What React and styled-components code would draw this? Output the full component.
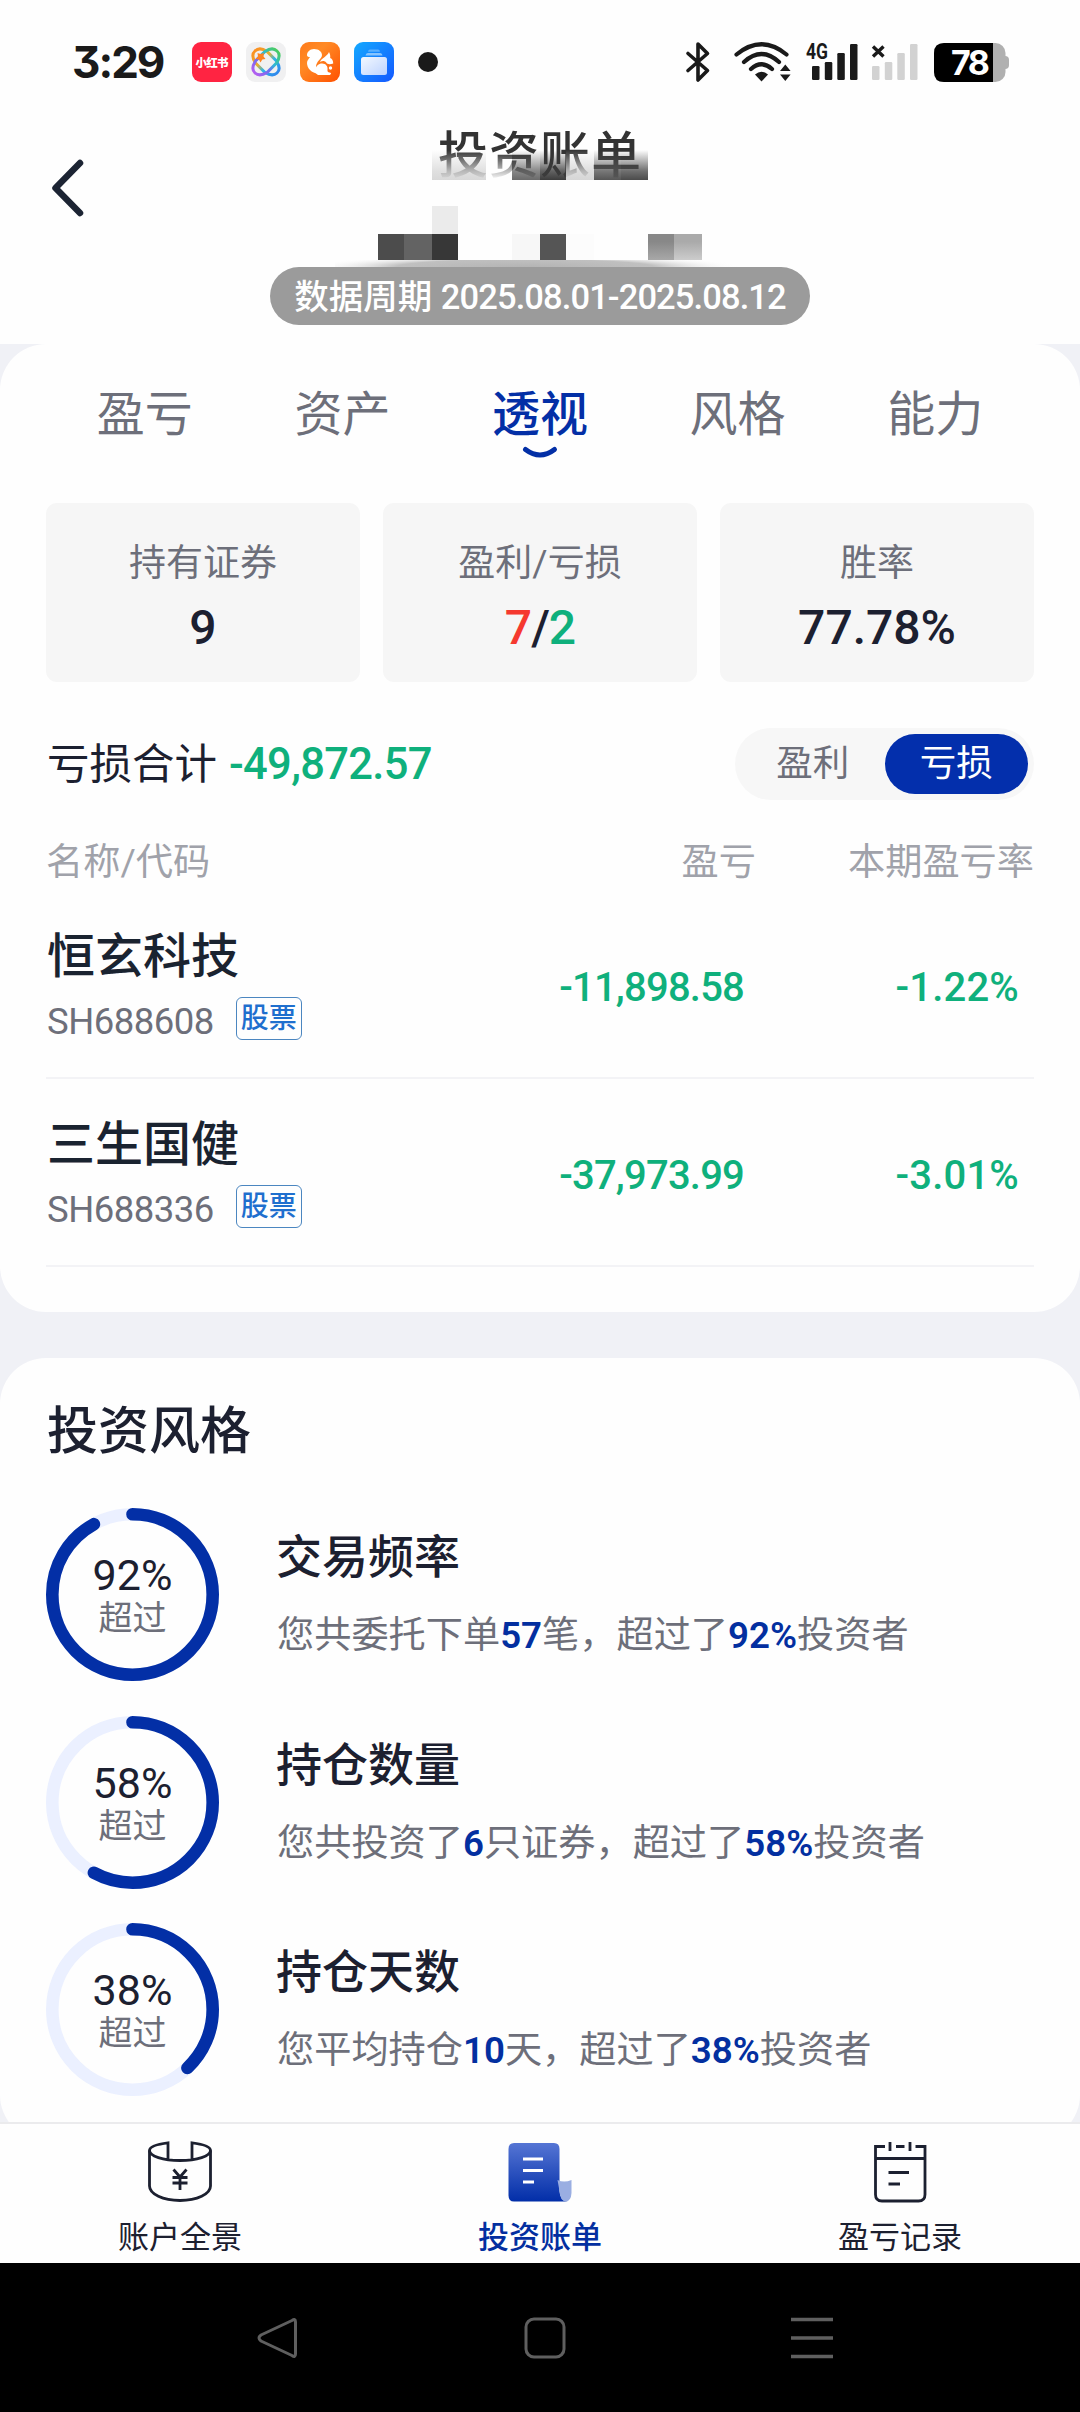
import React from "react";
import styled, { createGlobalStyle } from "styled-components";

const GlobalStyle = createGlobalStyle`
  * {
    box-sizing: border-box;
  }
  body {
    margin: 0;
    font-family: Roboto, "Noto Sans CJK SC", sans-serif;
    color: #1c2030;
    background-color: #fefefe;
  }
  svg {
    display: block;
    flex-shrink: 0;
    overflow: visible;
  }
`;

const Screen = styled.div`
  width: 1080px;
  height: 2412px;
  display: flex;
  flex-direction: column;
  overflow: hidden;
  background-color: #fefefe;
`;

/* status bar */

const StatusBar = styled.div`
  height: 124px;
  flex-shrink: 0;
  display: flex;
  align-items: center;
  justify-content: space-between;
  padding: 0 71px 0 72px;
  color: #1a1a1a;
`;

const StatusGroup = styled.div`
  display: flex;
  align-items: center;
  gap: ${(props) => props.$gap}px;
`;

const Clock = styled.span`
  width: 106px;
  font-family: Inter, sans-serif;
  font-feature-settings: "cv09" 1;
  font-size: 44px;
  font-weight: 700;
  line-height: 60px;
  letter-spacing: -2px;
`;

const MoreDot = styled.span`
  width: 20px;
  height: 20px;
  margin-left: 10px;
  border-radius: 50%;
  background-color: #1a1a1a;
`;

const Signals = styled(StatusGroup)`
  margin-left: 8px;
`;

/* header */

const Header = styled.header`
  position: relative;
  height: 220px;
  flex-shrink: 0;
  display: grid;
  grid-template-columns: 120px 1fr 120px;
`;

const BackButton = styled.div`
  padding: 35px 0 0 49px;
`;

const HeaderCenter = styled.div`
  display: flex;
  flex-direction: column;
  align-items: center;
`;

const Title = styled.h1`
  margin: 0;
  font-size: 50px;
  font-weight: 500;
  line-height: 64px;
  letter-spacing: 1px;
  color: #333;
`;

const Period = styled.div`
  width: 540px;
  height: 58px;
  margin-top: 79px;
  border-radius: 29px;
  text-align: center;
  font-size: 34.5px;
  font-weight: 500;
  line-height: 60px;
  white-space: nowrap;
  color: #fff;
  background-color: #9b9b9b;
`;

const PeriodDates = styled.span`
  letter-spacing: -0.9px;
`;

const Mosaic = styled.svg`
  position: absolute;
  left: 330px;
  top: 16px;
`;

/* content */

const Content = styled.main`
  flex: 1;
  min-height: 0;
  overflow: hidden;
  background-color: #f0f1f6;
`;

const Card = styled.section`
  height: ${(props) => props.height}px;
  padding: 0 46px;
  margin-bottom: 46px;
  border-radius: 46px;
  background-color: #fefefe;
`;

const Tabs = styled.nav`
  display: flex;
  height: 159px;
  padding-top: 39px;
`;

const Tab = styled.div`
  flex: 1;
  display: flex;
  flex-direction: column;
  align-items: center;
  font-size: 48px;
  line-height: 64px;
  font-weight: ${(props) => (props.$current ? 500 : 400)};
  color: ${(props) => (props.$current ? "#032fa6" : "#6d6f7a")};
`;

const Stats = styled.div`
  display: grid;
  grid-template-columns: repeat(3, 1fr);
  gap: 23px;
`;

const Stat = styled.div`
  height: 179px;
  padding-top: 39px;
  border-radius: 11px;
  text-align: center;
  background-color: #f6f6f6;
`;

const StatLabel = styled.div`
  font-size: 37px;
  line-height: 44px;
  color: #6d6f7a;
`;

const StatValue = styled.div`
  margin-top: 14px;
  font-size: 48px;
  font-weight: 500;
  line-height: 56px;
`;

const Counts = styled(StatValue)`
  letter-spacing: -1px;
`;

const Up = styled.span`
  color: #f5392f;
`;

const Down = styled.span`
  color: #0fb07c;
`;

const Summary = styled.div`
  display: flex;
  align-items: center;
  justify-content: space-between;
  height: 72px;
  margin-top: 46px;
`;

const SummaryText = styled.div`
  padding: 2px 0 0 1px;
  font-size: 42.5px;
  line-height: 60px;
`;

const Total = styled(Down)`
  margin-left: 12px;
  font-size: 43.5px;
  font-weight: 500;
  letter-spacing: -0.7px;
`;

const Toggle = styled.div`
  display: flex;
  width: 299px;
  height: 72px;
  padding: 6px;
  border-radius: 36px;
  background-color: #f7f7f7;
`;

const ToggleItem = styled.div`
  flex: 1;
  border-radius: 30px;
  text-align: center;
  font-size: 36.5px;
  line-height: 59px;
  color: ${(props) => (props.$on ? "#fff" : "#6d6f7a")};
  background-color: ${(props) => (props.$on ? "#032fac" : "transparent")};
`;

const TableHead = styled.div`
  display: grid;
  grid-template-columns: 1fr 301px 278px;
  margin: 40px 0 7px;
  font-size: 37.2px;
  line-height: 44px;
  color: #a0a2aa;
`;

const HeadCell = styled.div`
  text-align: ${(props) => props.$align || "left"};
`;

const Row = styled.div`
  display: grid;
  grid-template-columns: 1fr 300px 275px;
  height: 188px;
  padding-right: 15px;
  border-bottom: 2px solid #f3f3f6;
`;

const Security = styled.div`
  padding: 36px 0 0 1px;
`;

const SecurityName = styled.div`
  font-size: 48px;
  font-weight: 500;
  line-height: 60px;
  color: #1a2330;
`;

const SecurityCode = styled.div`
  display: flex;
  align-items: flex-start;
  gap: 22px;
  margin-top: 10px;
  font-size: 36.5px;
  line-height: 49px;
  letter-spacing: -0.5px;
  color: #6d6f7a;
`;

const Tag = styled.span`
  width: 66px;
  height: 43px;
  border: 1.5px solid #4b86c0;
  border-radius: 6px;
  text-align: center;
  font-size: 28px;
  font-weight: 500;
  line-height: 41px;
  letter-spacing: 0;
  color: #1f6fce;
`;

const Amount = styled.div`
  padding-top: 72px;
  text-align: right;
  font-size: 40px;
  font-weight: 500;
  line-height: 49px;
  letter-spacing: ${(props) => props.$tracking}px;
  color: #0fb07c;
`;

const CardTitle = styled.h2`
  margin: 0;
  padding: 39px 0 41px 1px;
  font-size: 51px;
  font-weight: 500;
  line-height: 70px;
`;

const StyleItem = styled.div`
  display: flex;
  height: 173px;
  margin-bottom: 34.5px;
`;

const RingBox = styled.div`
  display: grid;
  width: 173px;
  height: 173px;
  > * {
    grid-area: 1 / 1;
  }
`;

const RingText = styled.div`
  display: flex;
  flex-direction: column;
  align-items: center;
  padding-top: 43px;
  font-size: 43px;
  line-height: 48px;
`;

const RingCaption = styled.span`
  font-size: 34px;
  line-height: 38px;
  color: #6d6f7a;
`;

const StyleInfo = styled.div`
  padding: 19px 0 0 57px;
`;

const StyleName = styled.div`
  font-size: 46px;
  font-weight: 500;
  line-height: 60px;
`;

const StyleDesc = styled.div`
  margin-top: 23px;
  padding-left: 1px;
  font-size: 37.2px;
  line-height: 50px;
  white-space: nowrap;
  color: #6d6f7a;
  b {
    font-size: 36.7px;
    font-weight: 600;
    color: #032fa0;
  }
`;

/* bottom bars */

const TabBar = styled.nav`
  display: flex;
  height: 141px;
  flex-shrink: 0;
  border-top: 2px solid #ebebed;
`;

const TabBarItem = styled.div`
  flex: 1;
  display: flex;
  flex-direction: column;
  align-items: center;
  gap: 15px;
  padding-top: 17px;
  font-size: 31px;
  line-height: 40px;
  font-weight: ${(props) => (props.$current ? 500 : 400)};
  color: ${(props) => (props.$current ? "#032fa0" : "#1c2030")};
`;

const SystemNav = styled.div`
  display: flex;
  align-items: center;
  justify-content: space-between;
  height: 149px;
  flex-shrink: 0;
  padding: 0 247px 0 257px;
  background-color: #000;
`;

const RedBookIcon = () => (
  <svg width="40" height="40" viewBox="0 0 40 40">
    <rect width="40" height="40" rx="9" fill="#ff2442" />
    <text
      x="20"
      y="24.5"
      textAnchor="middle"
      fontSize="11.5"
      fontWeight="900"
      fontFamily="Noto Sans CJK SC, sans-serif"
      textLength="33"
      fill="#fff"
    >
      小红书
    </text>
  </svg>
);

const KnotIcon = () => (
  <svg width="40" height="40" viewBox="0 0 40 40">
    <defs>
      <linearGradient id="knotA" gradientUnits="userSpaceOnUse" x1="7" y1="7" x2="33" y2="33">
        <stop offset="0" stopColor="#ff8a1f" />
        <stop offset="0.4" stopColor="#e6b030" />
        <stop offset="0.6" stopColor="#2fb5e8" />
        <stop offset="1" stopColor="#2f7fee" />
      </linearGradient>
      <linearGradient id="knotB" gradientUnits="userSpaceOnUse" x1="33" y1="7" x2="7" y2="33">
        <stop offset="0" stopColor="#4fcf4a" />
        <stop offset="0.4" stopColor="#2fb8d8" />
        <stop offset="0.6" stopColor="#6b6df0" />
        <stop offset="1" stopColor="#c05cf0" />
      </linearGradient>
    </defs>
    <rect width="40" height="40" rx="9" fill="#f0f0f1" />
    <g fill="none" strokeWidth="3">
      <rect x="5" y="10.500" width="30" height="19" rx="8" transform="rotate(45 20 20)" stroke="none" />
      <path d="M9 9Q13.500 4.500 21 9.500L30.500 19Q35.500 27 31 31T19 30.500L9.500 21Q4.500 13 9 9z" stroke="url(#knotA)" />
      <path d="M31 9Q26.500 4.500 19 9.500L9.500 19Q4.500 27 9 31T21 30.500L30.500 21Q35.500 13 31 9z" stroke="url(#knotB)" />
    </g>
    <path d="M11.500 11l3 1 3.500-1-.5 3.500 2 2.500-3.200.5-1.800 3-1.500-3-3.500-.5 2.500-2.500z" fill="#ff8420" />
  </svg>
);

const SquirrelIcon = () => (
  <svg width="40" height="40" viewBox="0 0 40 40">
    <defs>
      <linearGradient id="ucBg" x1="0" y1="0" x2="1" y2="1">
        <stop offset="0" stopColor="#ff7a1a" />
        <stop offset="0.35" stopColor="#ff8a25" />
        <stop offset="1" stopColor="#ff5000" />
      </linearGradient>
    </defs>
    <rect width="40" height="40" rx="9" fill="url(#ucBg)" />
    <path
      d="M14 7c5 0 8 3 8 6 0 4-6 6-6 12 0 3 1.500 5 3 7-8-1-12-6-12-11 0-3 2-4 3-6-2 0-3-.5-3-2 0-3 3-6 7-6z"
      fill="#fff"
    />
    <path
      d="M29 10c1 2 1.500 3.500 1.200 6 2 .8 3 3 3 5.500-3 1-6 1-7-1-1.500-2-4-2-6.200-.5 1-4 7-5 9-10z"
      fill="#fff"
    />
    <path
      d="M22 21.500c4 0 6 3 5.500 6-.3 2 .5 3 2 3l1.500.5c0 1.500-1 2-2 2H18c-2-1-3-3-2.500-6 .5-3 3-5.500 6.500-5.500z"
      fill="#fff"
    />
    <circle cx="30.500" cy="26" r="1.700" fill="#fff" />
  </svg>
);

const StackIcon = () => (
  <svg width="40" height="40" viewBox="0 0 40 40">
    <defs>
      <linearGradient id="stackBg" x1="0" y1="0" x2="1" y2="1">
        <stop offset="0" stopColor="#14a9ff" />
        <stop offset="1" stopColor="#1458ff" />
      </linearGradient>
      <linearGradient id="stackFront" x1="0" y1="0" x2="1" y2="1">
        <stop offset="0" stopColor="#f2f8ff" />
        <stop offset="1" stopColor="#bdd3ff" />
      </linearGradient>
    </defs>
    <rect width="40" height="40" rx="9" fill="url(#stackBg)" />
    <path d="M14 9.800q.3-2.300 2-2.300h8q1.700 0 2 2.300z" fill="#5ab0ff" />
    <path d="M11.500 13.500q.3-2.500 2.300-2.500h12.400q2 0 2.300 2.500z" fill="#86c4ff" />
    <rect x="7" y="15" width="26" height="18" rx="2.500" fill="url(#stackFront)" />
  </svg>
);

const BluetoothIcon = () => (
  <svg width="24" height="40" viewBox="0 0 24 40" fill="none" stroke="#1a1a1a" strokeWidth="3.600" strokeLinejoin="round" strokeLinecap="round">
    <path d="M2 11.500L21.500 28.500L12 38V2L21.500 11.500L2 28.500" />
  </svg>
);

const WifiIcon = () => (
  <svg width="58" height="40" viewBox="0 0 58 40" fill="none" stroke="#1a1a1a" strokeWidth="4.200" strokeLinecap="round">
    <path d="M2.500 12.500Q27.500-8 52.500 12.500" />
    <path d="M10 20Q27.500 4 45 20" />
    <path d="M17 27Q27.500 17.500 38 27" />
    <path d="M21 32.500Q27.500 27 34 32.500L27.500 39.500z" fill="#1a1a1a" stroke="none" />
    <path d="M46 29L51.300 22.500L56.600 29zM46 32.500L51.300 39L56.600 32.500z" fill="#1a1a1a" stroke="none" />
  </svg>
);

const BARS = [
  [0, 24, 14],
  [12.8, 20, 18],
  [25.3, 11, 27],
  [38, 2, 36],
];

const SignalIcon = ({ color, children }) => (
  <svg width="52" height="40" viewBox="0 0 52 40">
    {BARS.map(([x, y, h]) => (
      <rect key={x} x={x + 6} y={y} width="7.500" height={h} rx="1.300" fill={color} />
    ))}
    {children}
  </svg>
);

const BatteryIcon = () => (
  <svg width="75" height="40" viewBox="0 0 75 40">
    <rect x="66" y="14" width="9" height="13" rx="4" fill="#b0b0b0" />
    <rect x="0" y="1" width="71.500" height="39" rx="10" fill="#b0b0b0" />
    <path d="M10 1H59V40H10Q0 40 0 30V11Q0 1 10 1z" fill="#000" />
    <text x="36.500" y="32.800" textAnchor="middle" fontFamily="Inter, sans-serif" fontWeight="700" fontSize="34" textLength="39" fill="#fff">
      78
    </text>
  </svg>
);

const BackIcon = () => (
  <svg width="36" height="58" viewBox="0 0 36 58" fill="none" stroke="#1c2433" strokeWidth="6.500" strokeLinecap="round" strokeLinejoin="round">
    <path d="M31 4L6.500 29L31 54" />
  </svg>
);

const FADES = [
  [102, 54, "#d8d8d8"],
  [182, 28, "#6a6a6a"],
  [210, 26, "#3c3c3c"],
  [236, 28, "#d6d6d6"],
  [264, 27, "#565656"],
  [291, 27, "#4b4b4b"],
];

const BLOCKS = [
  [102, 66, 26, 28, "#ebebeb"],
  [48, 94, 26, 26, "#4c4c4c"],
  [74, 94, 28, 26, "#636363"],
  [102, 94, 26, 26, "#373737"],
  [182, 94, 28, 26, "#f7f7f7"],
  [210, 94, 26, 26, "#555555"],
  [236, 94, 28, 26, "#fcfcfc"],
  [318, 94, 26, 26, "url(#pixA)"],
  [344, 94, 28, 26, "url(#pixB)"],
];

const HiddenAccount = () => (
  <Mosaic width="420" height="128" viewBox="0 0 420 128">
    <defs>
      {FADES.map(([x, , color]) => (
        <linearGradient key={x} id={`fade${x}`} x1="0" y1="0" x2="0" y2="1">
          <stop offset="0" stopColor={color} stopOpacity="0" />
          <stop offset="0.7" stopColor={color} stopOpacity="0.8" />
          <stop offset="1" stopColor={color} />
        </linearGradient>
      ))}
      <linearGradient id="fadeWhite" x1="0" y1="0" x2="0" y2="1">
        <stop offset="0" stopColor="#fefefe" stopOpacity="0" />
        <stop offset="1" stopColor="#fefefe" />
      </linearGradient>
      <linearGradient id="pixA" x1="0" y1="0" x2="0" y2="1">
        <stop offset="0.3" stopColor="#888" />
        <stop offset="1" stopColor="#a8a8a8" />
      </linearGradient>
      <linearGradient id="pixB" x1="0" y1="0" x2="0" y2="1">
        <stop offset="0.3" stopColor="#aaa" />
        <stop offset="1" stopColor="#ccc" />
      </linearGradient>
      <radialGradient id="pillShade" cx="0.47" cy="1" r="0.53" gradientTransform="matrix(1 0 0 3.400 0 -2.400)">
        <stop offset="0" stopColor="#b4b4b4" />
        <stop offset="0.6" stopColor="#c0c0c0" />
        <stop offset="1" stopColor="#fefefe" stopOpacity="0" />
      </radialGradient>
    </defs>
    <rect x="156" y="12" width="26" height="28" fill="url(#fadeWhite)" />
    {FADES.map(([x, w]) => (
      <rect key={x} x={x} y="10" width={w} height="30" fill={`url(#fade${x})`} />
    ))}
    {BLOCKS.map(([x, y, w, h, fill]) => (
      <rect key={`${x}-${y}`} x={x} y={y} width={w} height={h} fill={fill} />
    ))}
    <rect x="5" y="120" width="405" height="7" fill="url(#pillShade)" />
  </Mosaic>
);

const Smile = () => (
  <svg width="36" height="12" viewBox="0 0 36 12">
    <path d="M3.500 2.500Q18 13.500 32.500 2.500" fill="none" stroke="#032fa6" strokeWidth="5" strokeLinecap="round" />
  </svg>
);

const Ring = ({ percent }) => (
  <svg width="173" height="173" viewBox="0 0 173 173" fill="none" strokeWidth="12.600">
    <circle cx="86.500" cy="86.500" r="80.200" stroke="#ebf0ff" />
    <circle
      cx="86.500"
      cy="86.500"
      r="80.200"
      stroke="#032fa6"
      strokeLinecap="round"
      pathLength="100"
      strokeDasharray={`${percent} 100`}
      transform="rotate(-90 86.500 86.500)"
    />
  </svg>
);

const PanoramaIcon = () => (
  <svg width="64" height="62" viewBox="0 0 64 62" fill="none" stroke="#1c2030" strokeWidth="2.800">
    <path d="M20 19V1.800Q1.500 4 1.500 9.500C1.500 15 15 19.500 32 19.500S62.500 15 62.500 9.500Q62.500 4 44 1.800V19" />
    <path d="M1.500 9.500V45C1.500 53 15 59.500 32 59.500S62.500 53 62.500 45V9.500" />
    <path d="M25.500 28.500L32 36L38.500 28.500M24.500 36.500H39.500M24.500 42H39.500M32 36V49" />
  </svg>
);

const BillIcon = () => (
  <svg width="64" height="62" viewBox="0 0 64 62">
    <defs>
      <linearGradient id="bill" x1="0" y1="0" x2="0" y2="1">
        <stop offset="0" stopColor="#5575d4" />
        <stop offset="1" stopColor="#022ea8" />
      </linearGradient>
    </defs>
    <path d="M6 2H46Q51.500 2 51.500 8V50Q52 60 60 60.500H6Q0.500 60.500 0.500 54.500V8Q0.500 2 6 2z" fill="url(#bill)" />
    <path d="M49.500 39Q56 42 63.500 39V52Q63 60 58 60.500Q52 60 51.500 50z" fill="#9aaee2" />
    <path d="M15 18H35M15 29.500H35M15 41H26" stroke="#fff" strokeWidth="3" />
  </svg>
);

const RecordIcon = () => (
  <svg width="64" height="62" viewBox="0 0 64 62" fill="none" stroke="#1c2030" strokeWidth="2.800">
    <path d="M17 5.500H7.500V53.500Q7.500 60 14 60H50.500Q57 60 57 53.500V5.500H47.500" />
    <path d="M22 1V10M42 1V10M28 5.500H36.500M7.500 17.500H57M20.500 31.500H41M20.500 43H32" />
  </svg>
);

const TABS = ["盈亏", "资产", "透视", "风格", "能力"];

const SECURITIES = [
  { name: "恒玄科技", code: "SH688608", amount: "-11,898.58", rate: "-1.22%" },
  { name: "三生国健", code: "SH688336", amount: "-37,973.99", rate: "-3.01%" },
];

const STYLES = [
  { name: "交易频率", percent: 92, before: "您共委托下单", count: 57, after: "笔，超过了" },
  { name: "持仓数量", percent: 58, before: "您共投资了", count: 6, after: "只证券，超过了" },
  { name: "持仓天数", percent: 38, before: "您平均持仓", count: 10, after: "天，超过了" },
];

export default function App() {
  return (
    <Screen>
      <GlobalStyle />
      <StatusBar>
        <StatusGroup $gap={14}>
          <Clock>3:29</Clock>
          <RedBookIcon />
          <KnotIcon />
          <SquirrelIcon />
          <StackIcon />
          <MoreDot />
        </StatusGroup>
        <StatusGroup $gap={16}>
          <BluetoothIcon />
          <Signals $gap={14}>
            <WifiIcon />
            <StatusGroup $gap={8}>
              <SignalIcon color="#1a1a1a">
                <text x="0" y="16.500" fontFamily="Roboto, sans-serif" fontWeight="700" fontSize="22" textLength="22" lengthAdjust="spacingAndGlyphs" fill="#1a1a1a">
                  4G
                </text>
              </SignalIcon>
              <SignalIcon color="#d2d2d2">
                <path d="M7 4.500L17.500 14.500M17.500 4.500L7 14.500" stroke="#1a1a1a" strokeWidth="3.400" />
              </SignalIcon>
            </StatusGroup>
          </Signals>
          <BatteryIcon />
        </StatusGroup>
      </StatusBar>

      <Header>
        <BackButton>
          <BackIcon />
        </BackButton>
        <HeaderCenter>
          <Title>投资账单</Title>
          <Period>
            数据周期 <PeriodDates>2025.08.01-2025.08.12</PeriodDates>
          </Period>
        </HeaderCenter>
        <HiddenAccount />
      </Header>

      <Content>
        <Card height={968}>
          <Tabs>
            {TABS.map((tab) => (
              <Tab key={tab} $current={tab === "透视"}>
                {tab}
                {tab === "透视" && <Smile />}
              </Tab>
            ))}
          </Tabs>
          <Stats>
            <Stat>
              <StatLabel>持有证券</StatLabel>
              <StatValue>9</StatValue>
            </Stat>
            <Stat>
              <StatLabel>盈利/亏损</StatLabel>
              <Counts>
                <Up>7</Up>/<Down>2</Down>
              </Counts>
            </Stat>
            <Stat>
              <StatLabel>胜率</StatLabel>
              <StatValue>77.78%</StatValue>
            </Stat>
          </Stats>
          <Summary>
            <SummaryText>
              亏损合计<Total>-49,872.57</Total>
            </SummaryText>
            <Toggle>
              <ToggleItem>盈利</ToggleItem>
              <ToggleItem $on>亏损</ToggleItem>
            </Toggle>
          </Summary>
          <TableHead>
            <HeadCell>名称/代码</HeadCell>
            <HeadCell $align="right">盈亏</HeadCell>
            <HeadCell $align="right">本期盈亏率</HeadCell>
          </TableHead>
          {SECURITIES.map((item) => (
            <Row key={item.code}>
              <Security>
                <SecurityName>{item.name}</SecurityName>
                <SecurityCode>
                  {item.code}
                  <Tag>股票</Tag>
                </SecurityCode>
              </Security>
              <Amount $tracking={-0.8}>{item.amount}</Amount>
              <Amount $tracking={0.2}>{item.rate}</Amount>
            </Row>
          ))}
        </Card>

        <Card height={783}>
          <CardTitle>投资风格</CardTitle>
          {STYLES.map((item) => (
            <StyleItem key={item.name}>
              <RingBox>
                <Ring percent={item.percent} />
                <RingText>
                  {item.percent}%<RingCaption>超过</RingCaption>
                </RingText>
              </RingBox>
              <StyleInfo>
                <StyleName>{item.name}</StyleName>
                <StyleDesc>
                  {item.before}
                  <b>{item.count}</b>
                  {item.after}
                  <b>{item.percent}%</b>
                  投资者
                </StyleDesc>
              </StyleInfo>
            </StyleItem>
          ))}
        </Card>
      </Content>

      <TabBar>
        <TabBarItem>
          <PanoramaIcon />
          账户全景
        </TabBarItem>
        <TabBarItem $current>
          <BillIcon />
          投资账单
        </TabBarItem>
        <TabBarItem>
          <RecordIcon />
          盈亏记录
        </TabBarItem>
      </TabBar>

      <SystemNav>
        <svg width="42" height="42" viewBox="0 0 42 42" fill="none" stroke="#5f5f5f" strokeWidth="3" strokeLinejoin="round">
          <path d="M35 3.500Q38.500 1 38.500 5V37Q38.500 41 35 38.500L4 24Q0 21 4 18z" />
        </svg>
        <svg width="42" height="42" viewBox="0 0 42 42" fill="none" stroke="#5f5f5f" strokeWidth="3">
          <rect x="2" y="2" width="38" height="38" rx="8" />
        </svg>
        <svg width="42" height="42" viewBox="0 0 42 42" stroke="#5f5f5f" strokeWidth="3.400">
          <path d="M0 2.500H42M0 21H42M0 39.500H42" />
        </svg>
      </SystemNav>
    </Screen>
  );
}
